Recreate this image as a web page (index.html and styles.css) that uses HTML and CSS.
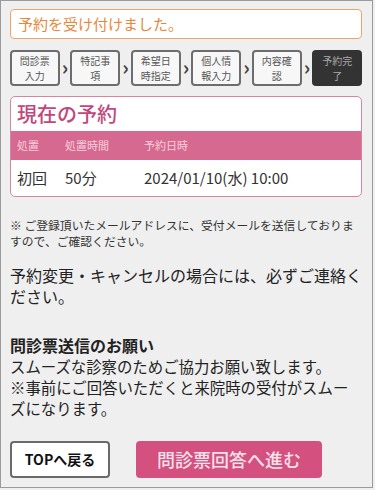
FILE: index.html
```html
<!DOCTYPE html>
<html lang="ja">
<head>
  <meta charset="UTF-8">
  <meta name="viewport" content="width=device-width, initial-scale=1">
  <title>予約完了</title>
  <link rel="stylesheet" href="styles.css">
</head>
<body>
  <div class="frame">
    <div class="done-title">予約を受け付けました。</div>

    <div class="steps">
      <div class="step">問診票<br>入力</div>
      <span class="arrow">&rsaquo;</span>
      <div class="step">特記事<br>項</div>
      <span class="arrow">&rsaquo;</span>
      <div class="step">希望日<br>時指定</div>
      <span class="arrow">&rsaquo;</span>
      <div class="step">個人情<br>報入力</div>
      <span class="arrow">&rsaquo;</span>
      <div class="step">内容確<br>認</div>
      <span class="arrow">&rsaquo;</span>
      <div class="step current">予約完<br>了</div>
    </div>

    <div class="card">
      <h2>現在の予約</h2>
      <div class="row head">
        <span class="c1">処置</span>
        <span class="c2">処置時間</span>
        <span class="c3">予約日時</span>
      </div>
      <div class="row body">
        <span class="c1">初回</span>
        <span class="c2">50分</span>
        <span class="c3">2024/01/10(水) 10:00</span>
      </div>
    </div>

    <p class="note">※ ご登録頂いたメールアドレスに、受付メールを送信しておりますので、ご確認ください。</p>

    <p class="contact">予約変更・キャンセルの場合には、必ずご連絡ください。</p>

    <h3>問診票送信のお願い</h3>
    <p class="request">スムーズな診察のためご協力お願い致します。<br>※事前にご回答いただくと来院時の受付がスムーズになります。</p>

    <div class="buttons">
      <a class="btn-top" href="#">TOPへ戻る</a>
      <a class="btn-next" href="#">問診票回答へ進む</a>
    </div>
  </div>
</body>
</html>
```

FILE: styles.css
```css
body {
  margin: 0;
  font-family: "Noto Sans CJK JP", "Noto Sans", sans-serif;
  background-color: #efefef;
  color: #222;
}
.frame {
  width: 352px;
  height: 478px;
  padding: 8px 10px 0 9px;
  border: 1px solid #9a9a9a;
  background-color: #efefef;
  overflow: hidden;
}
.done-title {
  height: 28px;
  border: 1px solid #eea56a;
  border-radius: 4px;
  background-color: #fff;
  color: #e8873a;
  font-size: 15px;
  line-height: 28px;
  padding-left: 7px;
}
.steps {
  display: flex;
  align-items: center;
  margin-top: 11px;
  height: 36px;
}
.step {
  width: 46px;
  height: 32px;
  border: 2px solid #6d6d6d;
  border-radius: 4px;
  background-color: #f7f7f7;
  font-size: 10px;
  line-height: 15px;
  color: #555;
  text-align: center;
  display: flex;
  align-items: center;
  justify-content: center;
}
.step.current {
  background-color: #333;
  border-color: #333;
  color: #aaa;
}
.arrow {
  width: 11px;
  text-align: center;
  font-size: 20px;
  font-weight: bold;
  color: #444;
  line-height: 1;
  margin-top: -3px;
}
.card {
  margin-top: 10px;
  border: 1px solid #d8849f;
  border-radius: 5px;
  background-color: #fff;
  overflow: hidden;
}
.card h2 {
  margin: 0;
  height: 34px;
  line-height: 34px;
  padding-left: 6px;
  font-size: 20px;
  font-weight: 500;
  color: #c2477c;
}
.row {
  display: flex;
  padding-left: 6px;
}
.row.head {
  background-color: #d6698f;
  color: #f8d0dd;
  font-size: 11px;
  height: 29px;
  line-height: 29px;
}
.row.body {
  height: 36px;
  line-height: 36px;
  font-size: 15px;
  color: #333;
}
.c1 { width: 48px; }
.c2 { width: 79px; }
.note {
  margin: 20px 0 0;
  font-size: 11.8px;
  line-height: 16px;
  color: #333;
}
.contact {
  margin: 16px 0 0;
  font-size: 16px;
  line-height: 21px;
  color: #222;
}
h3 {
  margin: 28px 0 0;
  font-size: 16px;
  line-height: 21px;
  color: #222;
}
.request {
  margin: 0;
  font-size: 15.4px;
  line-height: 21px;
  color: #222;
}
.buttons {
  display: flex;
  gap: 26px;
  margin-top: 22px;
}
.btn-top {
  width: 96px;
  height: 33px;
  border: 2px solid #6a6a6a;
  border-radius: 4px;
  background-color: #fff;
  color: #111;
  font-size: 14px;
  font-weight: bold;
  line-height: 33px;
  text-align: center;
  text-decoration: none;
}
.btn-next {
  width: 186px;
  height: 37px;
  border-radius: 4px;
  background-color: #d4507e;
  color: #f7e1ea;
  font-size: 18px;
  font-weight: 500;
  line-height: 37px;
  text-align: center;
  text-decoration: none;
}
```
